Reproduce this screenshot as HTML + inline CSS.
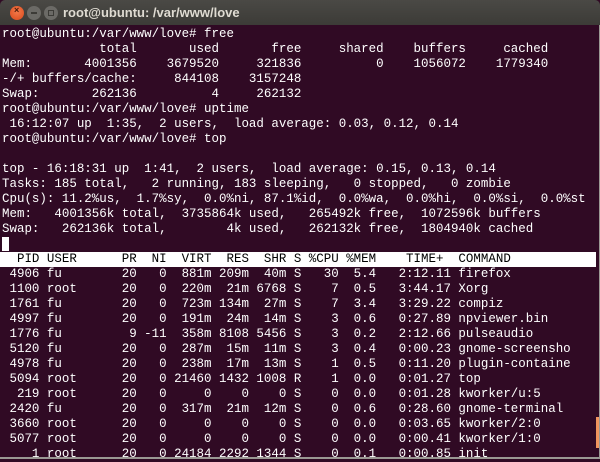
<!DOCTYPE html>
<html><head><meta charset="utf-8"><style>
html,body{margin:0;padding:0;width:600px;height:459px;overflow:hidden;background:#300a24;}
#tb{position:absolute;left:0;top:0;width:600px;height:25px;background:linear-gradient(#4a4945,#3c3b37);border-radius:5px 5px 0 0;}
.b{position:absolute;top:6px;width:14px;height:14px;border-radius:50%;}
#t{position:absolute;left:63px;top:5px;font:bold 13px "Liberation Sans",sans-serif;color:#dfdbd2;}
#term{position:absolute;left:2px;top:27px;margin:0;font:12.47px/15px "Liberation Mono",monospace;color:#fff;white-space:pre;}
.hd{background:#fff;color:#000;display:inline-block;width:594px;margin-left:-2px;padding-left:2px;}
.cur{background:#fff;display:inline-block;width:7px;height:14px;vertical-align:top;}
</style></head><body>
<div id="tb">
<div class="b" style="left:10px;background:radial-gradient(circle at 50% 40%,#f47a4a,#d9481b);"><span style="position:absolute;left:4px;top:-1px;font:bold 9px 'Liberation Sans',sans-serif;color:#4a1a0a">×</span></div>
<div class="b" style="left:27px;background:#6b6a66;"><span style="position:absolute;left:4px;top:6px;width:6px;height:2px;background:#3c3b37"></span></div>
<div class="b" style="left:44px;background:#6b6a66;"><span style="position:absolute;left:4px;top:4px;width:4px;height:4px;border:1px solid #3c3b37"></span></div>
<div id="t">root@ubuntu: /var/www/love</div>
</div>
<pre id="term">root@ubuntu:/var/www/love# free
             total       used       free     shared    buffers     cached
Mem:       4001356    3679520     321836          0    1056072    1779340
-/+ buffers/cache:     844108    3157248
Swap:       262136          4     262132
root@ubuntu:/var/www/love# uptime
 16:12:07 up  1:35,  2 users,  load average: 0.03, 0.12, 0.14
root@ubuntu:/var/www/love# top

top - 16:18:31 up  1:41,  2 users,  load average: 0.15, 0.13, 0.14
Tasks: 185 total,   2 running, 183 sleeping,   0 stopped,   0 zombie
Cpu(s): 11.2%us,  1.7%sy,  0.0%ni, 87.1%id,  0.0%wa,  0.0%hi,  0.0%si,  0.0%st
Mem:   4001356k total,  3735864k used,   265492k free,  1072596k buffers
Swap:   262136k total,        4k used,   262132k free,  1804940k cached
<span class="cur"></span>
<span class="hd">  PID USER      PR  NI  VIRT  RES  SHR S %CPU %MEM    TIME+  COMMAND         </span>
 4906 fu        20   0  881m 209m  40m S   30  5.4   2:12.11 firefox
 1100 root      20   0  220m  21m 6768 S    7  0.5   3:44.17 Xorg
 1761 fu        20   0  723m 134m  27m S    7  3.4   3:29.22 compiz
 4997 fu        20   0  191m  24m  14m S    3  0.6   0:27.89 npviewer.bin
 1776 fu         9 -11  358m 8108 5456 S    3  0.2   2:12.66 pulseaudio
 5120 fu        20   0  287m  15m  11m S    3  0.4   0:00.23 gnome-screensho
 4978 fu        20   0  238m  17m  13m S    1  0.5   0:11.20 plugin-containe
 5094 root      20   0 21460 1432 1008 R    1  0.0   0:01.27 top
  219 root      20   0     0    0    0 S    0  0.0   0:01.28 kworker/u:5
 2420 fu        20   0  317m  21m  12m S    0  0.6   0:28.60 gnome-terminal
 3660 root      20   0     0    0    0 S    0  0.0   0:03.65 kworker/2:0
 5077 root      20   0     0    0    0 S    0  0.0   0:00.41 kworker/1:0
    1 root      20   0 24184 2292 1344 S    0  0.1   0:00.85 init</pre>
<div style="position:absolute;left:596px;top:417px;width:3px;height:31px;background:#f0955e"></div>
<div style="position:absolute;left:599px;top:25px;width:1px;height:434px;background:#9a9893"></div>
<div style="position:absolute;left:0;top:457px;width:600px;height:2px;background:#9a9893"></div>
</body></html>
